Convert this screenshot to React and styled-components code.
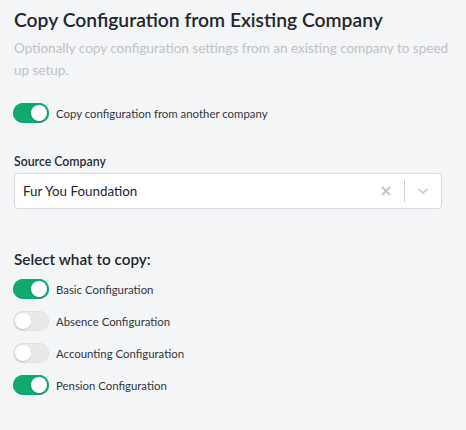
import React, { useState } from "react";
import styled, { createGlobalStyle } from "styled-components";

const Global = createGlobalStyle`
  html, body { margin: 0; padding: 0; background: #f4f5f7; }
  body { font-family: Lato, "Noto Sans", sans-serif; color: #22262b; }
  * { box-sizing: border-box; }
`;

const Page = styled.div`
  width: 466px;
  min-height: 430px;
  padding: 6px 14px 20px 14px;
  display: flex;
  flex-direction: column;
`;

const Title = styled.h2`
  margin: 0;
  font-size: 19.3px;
  font-weight: 600;
  line-height: 28px;
  color: #23272d;
`;

const Subtitle = styled.p`
  margin: 3px 0 0 0;
  font-size: 13.5px;
  line-height: 22px;
  color: #bfc2c7;
`;

const SwitchRow = styled.label`
  display: flex;
  align-items: center;
  gap: 7px;
  height: 20px;
  margin-top: ${(p) => p.$mt || 0}px;
  cursor: pointer;
`;

const Track = styled.span`
  position: relative;
  width: 36px;
  height: 20px;
  border-radius: 10px;
  flex-shrink: 0;
  margin-left: -1px;
  background: ${(p) => (p.$on ? "#10a96e" : "#e9e9ea")};
  box-shadow: inset 0 0 0 1px ${(p) => (p.$on ? "#10a96e" : "#e0e1e3")};
  transition: background 0.15s;
`;

const Knob = styled.span`
  position: absolute;
  top: 2px;
  left: ${(p) => (p.$on ? "18px" : "2px")};
  width: 16px;
  height: 16px;
  border-radius: 50%;
  background: #fff;
  box-shadow: 0 1px 2px rgba(0, 0, 0, 0.15);
`;

const SwitchLabel = styled.span`
  font-size: 11.4px;
  color: #33373c;
`;

const FieldLabel = styled.div`
  margin-top: 31px;
  font-size: 12.3px;
  font-weight: 600;
  color: #2a2e33;
  line-height: 16px;
`;

const SelectBox = styled.div`
  margin-top: 3px;
  height: 36px;
  width: 428px;
  background: #fff;
  border: 1px solid #d8dadd;
  border-radius: 4px;
  display: flex;
  align-items: center;
`;

const SelectValue = styled.div`
  flex: 1;
  padding-left: 8px;
  font-size: 13.4px;
  color: #23272d;
`;

const IconButton = styled.div`
  width: 36px;
  height: 100%;
  display: flex;
  align-items: center;
  justify-content: center;
  color: #c4c6ca;
`;

const Separator = styled.div`
  width: 1px;
  height: 22px;
  background: #cfd1d4;
`;

const SectionTitle = styled.div`
  margin-top: 40px;
  font-size: 15.3px;
  font-weight: 600;
  color: #23272d;
  line-height: 20px;
`;

const List = styled.div`
  display: flex;
  flex-direction: column;
  gap: 12px;
  margin-top: 10px;
`;

function Switch({ on, onToggle, label, mt }) {
  return (
    <SwitchRow $mt={mt} onClick={onToggle}>
      <Track $on={on}>
        <Knob $on={on} />
      </Track>
      <SwitchLabel>{label}</SwitchLabel>
    </SwitchRow>
  );
}

export default function App() {
  const [copy, setCopy] = useState(true);
  const [items, setItems] = useState([
    { label: "Basic Configuration", on: true },
    { label: "Absence Configuration", on: false },
    { label: "Accounting Configuration", on: false },
    { label: "Pension Configuration", on: true },
  ]);
  return (
    <Page>
      <Global />
      <Title>Copy Configuration from Existing Company</Title>
      <Subtitle>
        Optionally copy configuration settings from an existing company to speed up setup.
      </Subtitle>
      <Switch
        mt={22}
        on={copy}
        onToggle={() => setCopy(!copy)}
        label="Copy configuration from another company"
      />
      <FieldLabel>Source Company</FieldLabel>
      <SelectBox>
        <SelectValue>Fur You Foundation</SelectValue>
        <IconButton>
          <svg width="10" height="10" viewBox="0 0 10 10">
            <path d="M1 1L9 9M9 1L1 9" stroke="currentColor" strokeWidth="2" strokeLinecap="butt" />
          </svg>
        </IconButton>
        <Separator />
        <IconButton>
          <svg width="12" height="8" viewBox="0 0 12 8">
            <path d="M1.5 2L6 6L10.5 2" stroke="currentColor" strokeWidth="1.6" fill="none" />
          </svg>
        </IconButton>
      </SelectBox>
      <SectionTitle>Select what to copy:</SectionTitle>
      <List>
        {items.map((it, i) => (
          <Switch
            key={it.label}
            on={it.on}
            label={it.label}
            onToggle={() =>
              setItems(items.map((x, j) => (j === i ? { ...x, on: !x.on } : x)))
            }
          />
        ))}
      </List>
    </Page>
  );
}
